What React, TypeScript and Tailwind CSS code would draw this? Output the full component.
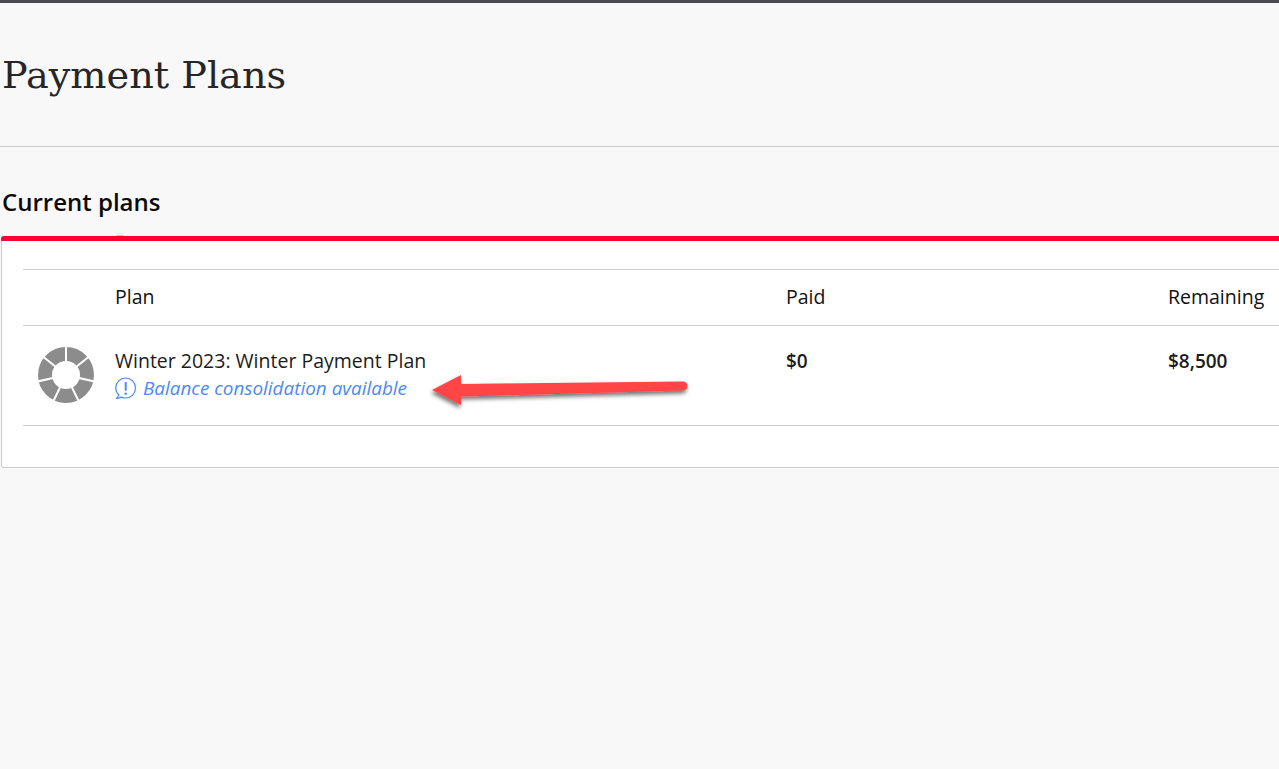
const spokes = [0, 51.43, 102.86, 154.29, 205.71, 257.14, 308.57];

function PlanRing() {
  return (
    <svg width="58" height="58" viewBox="0 0 58 58" className="-mt-[1px] shrink-0">
      <circle cx="29" cy="29" r="21" fill="none" stroke="#8c8c8c" strokeWidth="14" />
      {spokes.map((deg) => (
        <line
          key={deg}
          x1="29"
          y1="29"
          x2="29"
          y2="-1"
          stroke="#ffffff"
          strokeWidth="2"
          transform={`rotate(${deg} 29 29)`}
        />
      ))}
    </svg>
  );
}

function NoticeIcon() {
  return (
    <svg width="23" height="23" viewBox="0 0 23 23" fill="none" className="shrink-0">
      <path
        d="M4 18C2 16.2.7 13.8.7 11 .7 5.5 5.2 1 10.6 1s9.9 4.5 9.9 10-4.5 10-9.9 10c-1.5 0-2.9-.3-4.2-.9-1.4.9-3 1.3-5 1.2 1.1-.7 1.9-1.8 2.2-3.3z"
        stroke="#4a8af4"
        strokeWidth="1.2"
        strokeLinejoin="round"
      />
      <path d="M10.7 5v8.7" stroke="#4a8af4" strokeWidth="2" />
      <circle cx="10.7" cy="16.8" r="1.2" fill="#4a8af4" />
    </svg>
  );
}

export default function App() {
  return (
    <div className="relative h-[769px] w-[1279px] overflow-hidden bg-[#f8f8f8] font-['Open_Sans',sans-serif] text-[#1c1c1c]">
      <div className="h-[3px] bg-[#4a4a4f]" />

      <div className="h-[144px] border-b border-[#cdcdcd] pl-[2px] pt-[48px]">
        <h1 className="font-['DejaVu_Serif',serif] text-[38.2px] leading-[48px] text-[#262626]">Payment Plans</h1>
      </div>

      <h2 className="pl-[2px] pt-[40px] text-[24px] font-semibold leading-[30px] text-[#0a0a0a]">Current plans</h2>

      <div className="ml-[1px] mt-[19px] h-[232px] w-[1400px] rounded-[3px] border border-t-0 border-[#cdcdcd] bg-white">
        <div className="relative h-[5px] -ml-[1px] -mr-[1px] rounded-t-[3px] bg-[#ff0033]">
          <div className="absolute left-[115px] -top-[1px] h-[1px] w-[8px] bg-[#8fe3d6]" />
        </div>

        <div className="ml-[21px] mt-[28px] border-y border-[#cdcdcd]">
          <div className="flex h-[55px] items-center pb-[2px] text-[19.5px] text-[#111111]">
            <div className="w-[92px]" />
            <div className="w-[671px]">Plan</div>
            <div className="w-[382px]">Paid</div>
            <div>Remaining</div>
          </div>
        </div>

        <div className="ml-[21px] flex h-[100px] border-b border-[#cdcdcd] pt-[21px]">
          <div className="w-[92px] pl-[14px]">
            <PlanRing />
          </div>
          <div className="w-[671px]">
            <div className="text-[19.5px] leading-[28px]">Winter 2023: Winter Payment Plan</div>
            <div className="flex items-center gap-[5px] text-[18.9px] italic leading-[26px] text-[#4a8af4]">
              <NoticeIcon />
              <span>Balance consolidation available</span>
            </div>
          </div>
          <div className="w-[382px] text-[19px] font-semibold leading-[28px]">$0</div>
          <div className="text-[19px] font-semibold leading-[28px]">$8,500</div>
        </div>
      </div>

      {/* annotation arrow */}
      <svg width="280" height="50" viewBox="0 0 280 50" className="absolute left-[425px] top-[365px]">
        <defs>
          <filter id="arrowShadow" x="-10%" y="-30%" width="120%" height="180%">
            <feDropShadow dx="-1" dy="3" stdDeviation="2" floodColor="#000000" floodOpacity="0.55" />
          </filter>
        </defs>
        <path
          d="M7 25 L36 10 L36 19 L258 16.5 A4.5 4.5 0 0 1 258 25.5 L36 31.5 L36 40 Z"
          fill="#ff4444"
          filter="url(#arrowShadow)"
        />
      </svg>
    </div>
  );
}
